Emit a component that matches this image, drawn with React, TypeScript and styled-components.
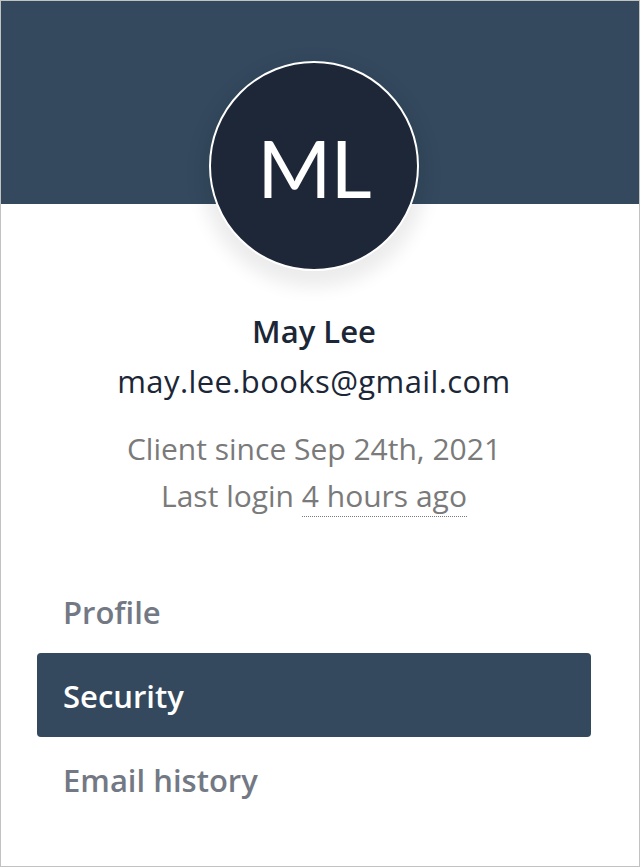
import React from 'react';
import styled, { createGlobalStyle } from 'styled-components';

const GlobalStyle = createGlobalStyle`
  html, body {
    margin: 0;
    padding: 0;
    background: #ffffff;
  }
  body {
    font-family: "Open Sans", "Noto Sans", sans-serif;
  }
`;

const Card = styled.div`
  width: 640px;
  height: 867px;
  box-sizing: border-box;
  border: 1px solid #c2c2c2;
  background: #ffffff;
  overflow: hidden;
`;

const Banner = styled.div`
  height: 203px;
  background-color: #34495e;
`;

const Body = styled.div`
  padding: 0 48px 0 36px;
  display: flex;
  flex-direction: column;
`;

const Identity = styled.div`
  display: flex;
  flex-direction: column;
  align-items: center;
  text-align: center;
`;

const Avatar = styled.div`
  width: 210px;
  height: 210px;
  margin-top: -143px;
  box-sizing: border-box;
  border-radius: 50%;
  border: 2px solid #ffffff;
  background-color: #1d2737;
  box-shadow: 0 8px 18px 8px rgba(0, 0, 0, 0.08);
  display: flex;
  align-items: center;
  justify-content: center;
  color: #ffffff;
  font-family: "Lato", "Open Sans", sans-serif;
  font-size: 80px;
  font-weight: 400;
  letter-spacing: -1px;
  line-height: 1;
  padding-top: 1px;
`;

const Name = styled.div`
  margin-top: 35px;
  font-size: 31px;
  line-height: 50px;
  font-weight: 600;
  color: #1b2636;
`;

const Email = styled.div`
  font-size: 31px;
  letter-spacing: 0.4px;
  line-height: 50px;
  color: #1b2636;
`;

const Meta = styled.div`
  margin-top: 19px;
  font-size: 30px;
  line-height: 47px;
  color: #7a7a7a;
`;

const Since = styled.span`
  border-bottom: 1px dotted #7a7a7a;
`;

const Nav = styled.nav`
  margin-top: 50px;
  display: flex;
  flex-direction: column;
`;

const NavItem = styled.a<{ $active?: boolean }>`
  height: 84px;
  box-sizing: border-box;
  display: flex;
  align-items: center;
  padding: 2px 26px 0;
  border-radius: 4px;
  font-size: 31px;
  font-weight: 600;
  text-decoration: none;
  cursor: pointer;
  color: ${({ $active }) => ($active ? '#ffffff' : '#737984')};
  background-color: ${({ $active }) => ($active ? '#34495e' : 'transparent')};
`;

export default function App() {
  return (
    <>
      <GlobalStyle />
      <Card>
        <Banner />
        <Body>
          <Identity>
            <Avatar>ML</Avatar>
            <Name>May Lee</Name>
            <Email>may.lee.books@gmail.com</Email>
            <Meta>
              Client since Sep 24th, 2021
              <br />
              Last login <Since title="Oct 3rd, 2021">4 hours ago</Since>
            </Meta>
          </Identity>
          <Nav>
            <NavItem>Profile</NavItem>
            <NavItem $active>Security</NavItem>
            <NavItem>Email history</NavItem>
          </Nav>
        </Body>
      </Card>
    </>
  );
}
